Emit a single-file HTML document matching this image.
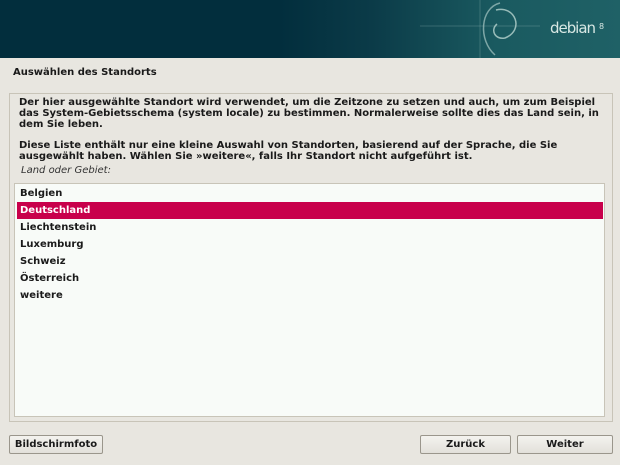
<!DOCTYPE html>
<html><head><meta charset="utf-8"><style>
*{margin:0;padding:0;box-sizing:border-box}
body{width:620px;height:465px;background:#e8e6e0;font-family:"DejaVu Sans","Liberation Sans",sans-serif;font-size:10px;font-weight:bold;color:#1a1a1a;position:relative;overflow:hidden}
#hdr{position:absolute;left:0;top:0;width:620px;height:58px;background:linear-gradient(90deg,#022e3d 0%,#022e3d 45%,#0b3b48 60%,#1a5a60 80%,#1f6166 100%);overflow:hidden}
#title{position:absolute;left:13px;top:67px;font-size:10px}
#frame{position:absolute;left:9px;top:93px;width:604px;height:329px;border:1px solid #c8c4b8}
.p{position:absolute;left:19px;line-height:11px;width:595px;white-space:nowrap}
#lbl{position:absolute;left:21px;top:165px;font-style:italic;font-weight:normal;color:#333}
#list{position:absolute;left:14px;top:183px;width:591px;height:234px;background:#f8fbf8;border:1px solid #c8c4b8}
.it{position:absolute;left:2px;width:586px;height:17px;line-height:17px;padding-left:3px}
.sel{background:#c8004b;color:#fff}
.btn{position:absolute;top:435px;height:19px;border:1px solid #9a968c;border-radius:2px;background:linear-gradient(#f4f3ef,#e2e0da);text-align:center;line-height:17px}
</style></head><body>
<div id="hdr">
<svg width="620" height="58" style="position:absolute;left:0;top:0">
<line x1="420" y1="26" x2="540" y2="26" stroke="#8fb3b3" stroke-width="0.6" opacity="0.6"/>
<line x1="480" y1="0" x2="480" y2="58" stroke="#8fb3b3" stroke-width="0.6" opacity="0.5"/>
<path d="M500 3 C480 8 478 40 495 55" stroke="#a8c8c4" stroke-width="1.5" fill="none" opacity="0.7"/>
<path d="M496 10 C515 5 525 30 505 38 C495 40 490 30 497 24" stroke="#b8d4d0" stroke-width="1.5" fill="none" opacity="0.8"/>
<text x="550" y="33" fill="#d8e8e4" font-family="DejaVu Sans" font-size="15" font-weight="normal" textLength="46">debian</text>
<text x="599" y="29" fill="#d8e8e4" font-family="DejaVu Sans" font-size="8" font-weight="normal">8</text>
</svg>
</div>
<div id="title">Auswählen des Standorts</div>
<div id="frame"></div>
<div class="p" style="top:97px">Der hier ausgewählte Standort wird verwendet, um die Zeitzone zu setzen und auch, um zum Beispiel<br>das System-Gebietsschema (system locale) zu bestimmen. Normalerweise sollte dies das Land sein, in<br>dem Sie leben.</div>
<div class="p" style="top:140px">Diese Liste enthält nur eine kleine Auswahl von Standorten, basierend auf der Sprache, die Sie<br>ausgewählt haben. Wählen Sie »weitere«, falls Ihr Standort nicht aufgeführt ist.</div>
<div id="lbl">Land oder Gebiet:</div>
<div id="list">
<div class="it" style="top:1px">Belgien</div>
<div class="it sel" style="top:18px">Deutschland</div>
<div class="it" style="top:35px">Liechtenstein</div>
<div class="it" style="top:52px">Luxemburg</div>
<div class="it" style="top:69px">Schweiz</div>
<div class="it" style="top:86px">Österreich</div>
<div class="it" style="top:103px">weitere</div>
</div>
<div class="btn" style="left:9px;width:94px">Bildschirmfoto</div>
<div class="btn" style="left:420px;width:91px">Zurück</div>
<div class="btn" style="left:517px;width:96px">Weiter</div>
</body></html>
